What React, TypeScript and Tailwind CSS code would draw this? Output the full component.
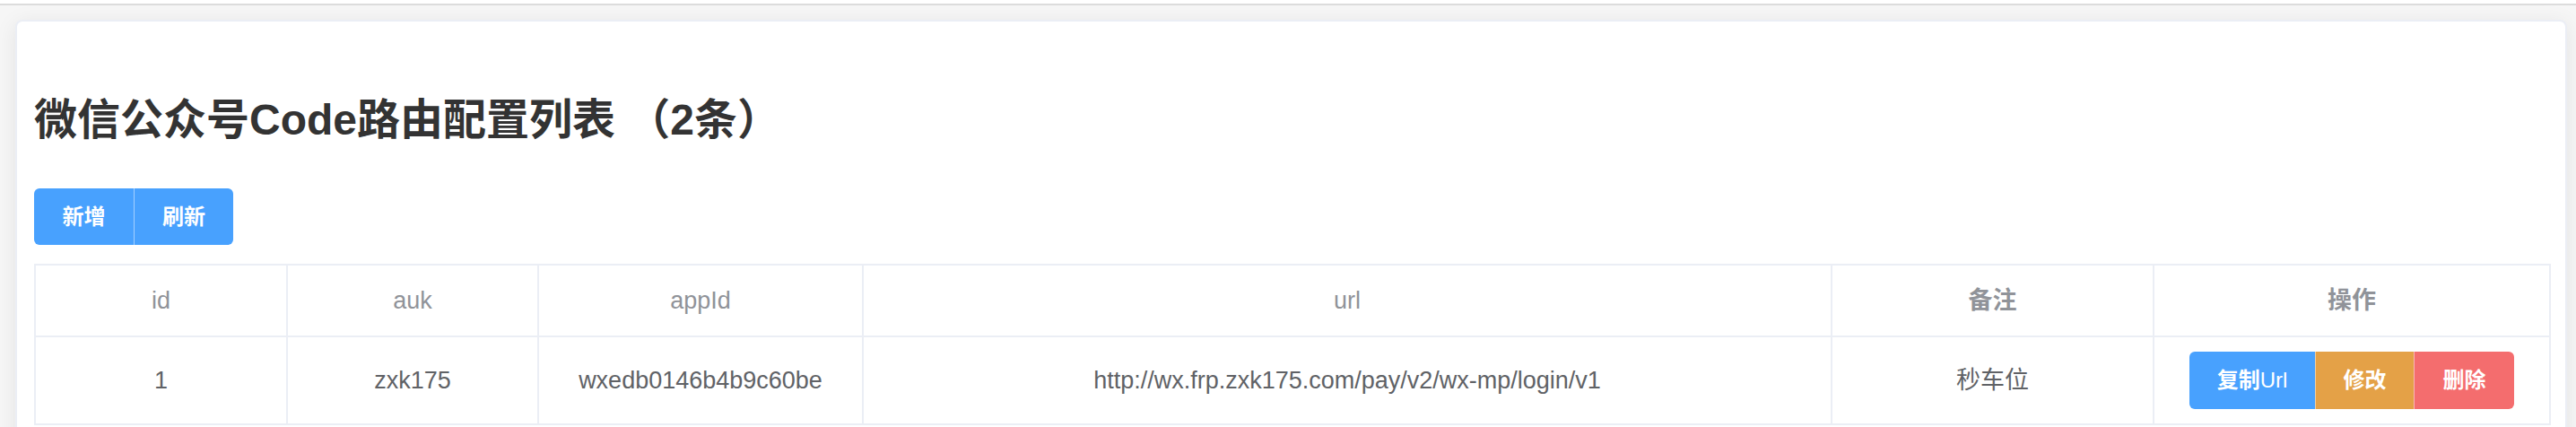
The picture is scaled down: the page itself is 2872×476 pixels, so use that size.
import React from "react";

const FONT = "font-['Liberation_Sans','Noto_Sans_CJK_SC',sans-serif]";

type Row = { id: string; auk: string; appId: string; url: string; note: string };

const rows: Row[] = [
  {
    id: "1",
    auk: "zxk175",
    appId: "wxedb0146b4b9c60be",
    url: "http://wx.frp.zxk175.com/pay/v2/wx-mp/login/v1",
    note: "秒车位",
  },
];

const cell = "border-2 border-[#ebeef5]";

export default function App() {
  return (
    <div className={`${FONT} h-[476px] w-[2872px] bg-[#f6f6f6] overflow-hidden`}>
      <div className="h-[6px] bg-white border-b-2 border-[#dcdcdc]" />
      <div className="pt-[16px] pl-[17px] pr-[10px]">
        <div className="rounded-[8px] border-2 border-[#ebeef5] bg-white pl-[19px] pr-[18px] pt-[86px] pb-[40px] shadow-[0_4px_24px_rgba(0,0,0,0.08)]">
          <h2 className="text-[48px] leading-[48px] font-bold text-[#333333] m-0">
            微信公众号Code路由配置列表 （2条）
          </h2>
          <div className="mt-[52px] flex">
            <div className="flex rounded-[6px] overflow-hidden h-[63px] bg-[#48a1fe] text-white text-[24px] font-bold">
              <button className="w-[111px] flex items-center justify-center">新增</button>
              <button className="w-[111px] flex items-center justify-center border-l border-white/50">刷新</button>
            </div>
          </div>
          <table className="mt-[21px] table-fixed border-collapse w-[2804px] text-[27px]">
            <thead>
              <tr className="h-[80px] text-[#909399]">
                <th className={`w-[281px] ${cell} font-normal`}>id</th>
                <th className={`w-[280px] ${cell} font-normal`}>auk</th>
                <th className={`w-[362px] ${cell} font-normal`}>appId</th>
                <th className={`w-[1080px] ${cell} font-normal`}>url</th>
                <th className={`w-[359px] ${cell} font-bold`}>备注</th>
                <th className={`w-[442px] ${cell} font-bold`}>操作</th>
              </tr>
            </thead>
            <tbody>
              {rows.map((r) => (
                <tr key={r.id} className="h-[98px] text-[#606266] text-center">
                  <td className={cell}>{r.id}</td>
                  <td className={cell}>{r.auk}</td>
                  <td className={cell}>{r.appId}</td>
                  <td className={cell}>{r.url}</td>
                  <td className={cell}>{r.note}</td>
                  <td className={cell}>
                    <div className="flex justify-center">
                      <div className="flex h-[64px] rounded-[6px] overflow-hidden text-white text-[24px] font-bold">
                        <button className="w-[140px] bg-[#48a1fe] flex items-center justify-center">
                          复制<span className="font-normal">Url</span>
                        </button>
                        <button className="w-[110px] bg-[#e4a147] border-l border-white/50 flex items-center justify-center">修改</button>
                        <button className="w-[112px] bg-[#f46d6e] border-l border-white/50 flex items-center justify-center">删除</button>
                      </div>
                    </div>
                  </td>
                </tr>
              ))}
            </tbody>
          </table>
        </div>
      </div>
    </div>
  );
}
